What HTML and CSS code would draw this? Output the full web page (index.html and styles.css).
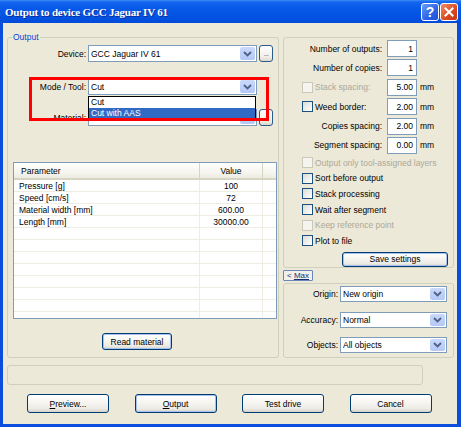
FILE: index.html
```html
<!DOCTYPE html>
<html>
<head>
<meta charset="utf-8">
<title>Output to device</title>
<link rel="stylesheet" href="styles.css">
</head>
<body>
<div class="window">
  <div class="titlebar">
    <span class="title">Output to device GCC Jaguar IV 61</span>
    <div class="tb-buttons">
      <span class="tb-btn help">?</span>
      <span class="tb-btn close"><svg width="10" height="10" viewBox="0 0 10 10"><path d="M1.5 1.5 L8.5 8.5 M8.5 1.5 L1.5 8.5" stroke="#fff" stroke-width="2" stroke-linecap="square"/></svg></span>
    </div>
  </div>
  <div class="client">
    <div class="top">
      <div class="group left-group">
        <span class="legend">Output</span>
        <div class="form-row">
          <span class="form-label">Device:</span>
          <div class="combo wide"><span class="txt">GCC Jaguar IV 61</span><span class="arrow"><svg width="9" height="6" viewBox="0 0 9 6"><path d="M1 1 L4.5 4.5 L8 1" stroke="#4D6185" stroke-width="1.8" fill="none"/></svg></span></div>
          <button class="dots">...</button>
        </div>
        <div class="form-row mode-row">
          <span class="form-label">Mode / Tool:</span>
          <div class="combo wide"><span class="txt">Cut</span><span class="arrow"><svg width="9" height="6" viewBox="0 0 9 6"><path d="M1 1 L4.5 4.5 L8 1" stroke="#4D6185" stroke-width="1.8" fill="none"/></svg></span></div>
        </div>
        <div class="form-row material-row">
          <span class="form-label">Material:</span>
          <div class="combo wide"><span class="txt"></span><span class="arrow"><svg width="9" height="6" viewBox="0 0 9 6"><path d="M1 1 L4.5 4.5 L8 1" stroke="#4D6185" stroke-width="1.8" fill="none"/></svg></span></div>
          <button class="dots"></button>
        </div>
        <div class="listview">
          <div class="lv-head">
            <span class="lv-c1">Parameter</span>
            <span class="lv-c2">Value</span>
            <span class="lv-c3"></span>
          </div>
          <div class="lv-row"><span class="lv-c1">Pressure [g]</span><span class="lv-c2">100</span><span class="lv-c3"></span></div>
          <div class="lv-row"><span class="lv-c1">Speed [cm/s]</span><span class="lv-c2">72</span><span class="lv-c3"></span></div>
          <div class="lv-row"><span class="lv-c1">Material width [mm]</span><span class="lv-c2">600.00</span><span class="lv-c3"></span></div>
          <div class="lv-row"><span class="lv-c1">Length [mm]</span><span class="lv-c2">30000.00</span><span class="lv-c3"></span></div>
          <div class="lv-row"><span class="lv-c1"></span><span class="lv-c2"></span><span class="lv-c3"></span></div>
          <div class="lv-row"><span class="lv-c1"></span><span class="lv-c2"></span><span class="lv-c3"></span></div>
          <div class="lv-row"><span class="lv-c1"></span><span class="lv-c2"></span><span class="lv-c3"></span></div>
          <div class="lv-row"><span class="lv-c1"></span><span class="lv-c2"></span><span class="lv-c3"></span></div>
          <div class="lv-row"><span class="lv-c1"></span><span class="lv-c2"></span><span class="lv-c3"></span></div>
          <div class="lv-row"><span class="lv-c1"></span><span class="lv-c2"></span><span class="lv-c3"></span></div>
          <div class="lv-row"><span class="lv-c1"></span><span class="lv-c2"></span><span class="lv-c3"></span></div>
          <div class="lv-row"><span class="lv-c1"></span><span class="lv-c2"></span><span class="lv-c3"></span></div>
        </div>
        <button class="btn read-btn default">Read material</button>

        <div class="dropdown">
          <div class="item">Cut</div>
          <div class="item sel">Cut with AAS</div>
        </div>
        <div class="highlight"></div>
      </div>

      <div class="right-col">
        <div class="group rg1">
          <div class="fields">
            <div class="field-row"><span class="field-label">Number of outputs:</span><span class="num">1</span></div>
            <div class="field-row"><span class="field-label">Number of copies:</span><span class="num">1</span></div>
            <div class="field-row"><span class="field-label check disabled"><span class="cb off"></span>Stack spacing:</span><span class="num">5.00</span><span class="unit">mm</span></div>
            <div class="field-row"><span class="field-label check"><span class="cb"></span>Weed border:</span><span class="num">2.00</span><span class="unit">mm</span></div>
            <div class="field-row"><span class="field-label">Copies spacing:</span><span class="num">2.00</span><span class="unit">mm</span></div>
            <div class="field-row"><span class="field-label">Segment spacing:</span><span class="num">0.00</span><span class="unit">mm</span></div>
          </div>
          <div class="checks">
            <div class="check-row disabled"><span class="cb off"></span>Output only tool-assigned layers</div>
            <div class="check-row"><span class="cb"></span>Sort before output</div>
            <div class="check-row"><span class="cb"></span>Stack processing</div>
            <div class="check-row"><span class="cb"></span>Wait after segment</div>
            <div class="check-row disabled"><span class="cb off"></span>Keep reference point</div>
            <div class="check-row"><span class="cb"></span>Plot to file</div>
          </div>
          <button class="btn save-btn default">Save settings</button>
        </div>
        <button class="max-btn">&lt; <u>Max</u></button>
        <div class="group rg2">
          <div class="sel-row">
            <span class="sel-label">Origin:</span>
            <div class="combo narrow"><span class="txt">New origin</span><span class="arrow"><svg width="9" height="6" viewBox="0 0 9 6"><path d="M1 1 L4.5 4.5 L8 1" stroke="#4D6185" stroke-width="1.8" fill="none"/></svg></span></div>
          </div>
          <div class="sel-row">
            <span class="sel-label">Accuracy:</span>
            <div class="combo narrow"><span class="txt">Normal</span><span class="arrow"><svg width="9" height="6" viewBox="0 0 9 6"><path d="M1 1 L4.5 4.5 L8 1" stroke="#4D6185" stroke-width="1.8" fill="none"/></svg></span></div>
          </div>
          <div class="sel-row">
            <span class="sel-label">Objects:</span>
            <div class="combo narrow"><span class="txt">All objects</span><span class="arrow"><svg width="9" height="6" viewBox="0 0 9 6"><path d="M1 1 L4.5 4.5 L8 1" stroke="#4D6185" stroke-width="1.8" fill="none"/></svg></span></div>
          </div>
        </div>
      </div>
    </div>

    <div class="status"></div>

    <div class="buttons">
      <button class="btn"><u>P</u>review...</button>
      <button class="btn default"><u>O</u>utput</button>
      <button class="btn">Test drive</button>
      <button class="btn">Cancel</button>
    </div>
  </div>
</div>
</body>
</html>
```

FILE: styles.css
```css
* { box-sizing: border-box; }
html, body { margin: 0; padding: 0; }
body {
  width: 461px;
  height: 427px;
  overflow: hidden;
  font-family: "Liberation Sans", Arial, sans-serif;
  font-size: 8.5px;
  color: #000;
  background: #ECE9D8;
}
button { font: inherit; color: #000; margin: 0; padding: 0; }

.window {
  width: 461px;
  height: 427px;
  display: flex;
  flex-direction: column;
}

/* title bar */
.titlebar {
  height: 23px;
  flex: none;
  display: flex;
  align-items: center;
  justify-content: space-between;
  padding: 0 3px 0 5px;
  background: linear-gradient(#3C8DF8 0, #1466EE 2px, #075AE8 35%, #0352E2 75%, #044AD8 100%);
}
.title {
  color: #fff;
  font-family: "Liberation Serif", serif;
  font-weight: bold;
  font-size: 11px;
  letter-spacing: -0.2px;
  text-shadow: 1px 1px 0 #0B2C9A;
}
.tb-buttons { display: flex; gap: 1px; }
.tb-btn {
  width: 18px;
  height: 18px;
  border: 1px solid #fff;
  border-radius: 3px;
  display: flex;
  align-items: center;
  justify-content: center;
}
.help {
  background: linear-gradient(135deg, #6A9CFA, #2C63E6 60%, #1C4FD8);
  color: #fff;
  font-weight: bold;
  font-size: 14px;
  line-height: 1;
}
.close {
  background: linear-gradient(135deg, #F08A66, #DA4A22 60%, #C43A14);
}

/* client */
.client {
  flex: 1;
  display: flex;
  flex-direction: column;
  border-style: solid;
  border-color: #0B4DDC;
  border-width: 0 4px 3px 3px;
  padding: 14px 3px 0 4px;
  background: #ECE9D8;
}
.top {
  display: flex;
  gap: 4px;
  height: 321px;
}
.group {
  border: 1px solid #D0D0BF;
  border-radius: 3px;
  position: relative;
}
.legend {
  position: absolute;
  left: 4px;
  top: -6px;
  padding: 0 1px;
  line-height: 10px;
  background: #ECE9D8;
  color: #0046D5;
}

/* left group */
.left-group {
  width: 272px;
  display: flex;
  flex-direction: column;
  padding-top: 7px;
}
.form-row {
  display: flex;
  align-items: center;
  height: 17px;
  gap: 2px;
  flex: none;
}
.form-label {
  width: 78px;
  text-align: right;
}
.mode-row { margin-top: 16px; }
.material-row { margin-top: 14px; }

.combo {
  display: flex;
  align-items: center;
  height: 100%;
  border: 1px solid #7F9DB9;
  background: #fff;
  padding-left: 2px;
}
.combo.wide { width: 169px; }
.combo.narrow { width: 107px; }
.combo .txt { flex: 1; white-space: nowrap; overflow: hidden; }
.arrow {
  width: 15px;
  height: calc(100% - 2px);
  margin-right: 1px;
  border-radius: 2px;
  background: linear-gradient(#CAD9FC, #B4C8F6);
  display: flex;
  align-items: center;
  justify-content: center;
}
.dots {
  width: 14px;
  height: 17px;
  border: 1px solid #2D5A8C;
  border-radius: 3px;
  background: linear-gradient(#FFFFFF, #F1EFE8 70%, #DCD8CC);
  font-size: 8px;
  line-height: 8px;
  display: flex;
  align-items: flex-end;
  justify-content: center;
  padding-bottom: 3px;
  color: #666;
  letter-spacing: -0.5px;
}

/* list view */
.listview {
  margin: 36px 0 0 5px;
  width: 264px;
  height: 157px;
  flex: none;
  border: 1px solid #7F9DB9;
  background: #fff;
  overflow: hidden;
}
.lv-head, .lv-row {
  display: grid;
  grid-template-columns: 186px 63px 1fr;
}
.lv-head {
  height: 17px;
  background: linear-gradient(#FFFFFF, #F6F5EF 60%, #EDECE2);
  border-bottom: 2px solid #D8D4C4;
}
.lv-head span {
  display: flex;
  align-items: center;
  border-right: 1px solid #D8D4C4;
}
.lv-head .lv-c1 { padding-left: 7px; }
.lv-head .lv-c2 { justify-content: center; }
.lv-head .lv-c3 { border-right: none; }
.lv-row { height: 12px; }
.lv-row span {
  display: flex;
  align-items: center;
  border-bottom: 1px solid #EFEDE3;
  border-right: 1px solid #EFEDE3;
}
.lv-row .lv-c1 { padding-left: 5px; }
.lv-row .lv-c2 { justify-content: center; }
.lv-row .lv-c3 { border-right: none; }

.btn {
  width: 82px;
  height: 19px;
  border: 1px solid #003C74;
  border-radius: 3px;
  background: linear-gradient(#FFFFFF 0%, #F7F6F2 40%, #ECEBE6 80%, #D8D2C6 100%);
  text-align: center;
}
.btn.default {
  box-shadow: inset 0 0 0 1px #A8C2EF;
}
.read-btn {
  margin: 14px 0 0 94px;
  width: 70px;
  height: 17px;
  flex: none;
}

/* overlays */
.dropdown {
  position: absolute;
  left: 80px;
  top: 58px;
  width: 168px;
  height: 24px;
  border: 1px solid #000;
  background: #fff;
  z-index: 2;
}
.item {
  height: 11px;
  line-height: 11px;
  padding-left: 2px;
}
.item.sel {
  background: #316AC5;
  color: #fff;
}
.highlight {
  position: absolute;
  left: 21px;
  top: 39px;
  width: 240px;
  height: 44px;
  border: 3px solid #FF0000;
  z-index: 3;
}

/* right column */
.right-col {
  width: 171px;
  display: flex;
  flex-direction: column;
}
.rg1 {
  height: 231px;
  flex: none;
  padding-top: 2px;
  display: flex;
  flex-direction: column;
}
.fields {
  display: flex;
  flex-direction: column;
  gap: 2.4px;
}
.field-row {
  display: flex;
  align-items: center;
  height: 17px;
}
.field-label {
  width: 98px;
  display: flex;
  align-items: center;
  justify-content: flex-end;
  white-space: nowrap;
}
.field-label.check {
  justify-content: flex-start;
  padding-left: 18px;
  gap: 2px;
}
.num {
  width: 30px;
  height: 17px;
  margin-left: 5px;
  border: 1px solid #7F9DB9;
  background: #fff;
  display: flex;
  align-items: center;
  justify-content: flex-end;
  padding-right: 3px;
}
.unit { margin-left: 3px; }

.checks {
  margin-top: 1px;
  display: flex;
  flex-direction: column;
}
.check-row {
  height: 15.6px;
  display: flex;
  align-items: center;
  padding-left: 18px;
  gap: 2px;
  white-space: nowrap;
}
.cb {
  width: 11px;
  height: 11px;
  flex: none;
  border: 1px solid #1C5180;
  background: linear-gradient(135deg, #DCDCD5, #FFFFFF);
}
.cb.off {
  border-color: #CAC8BB;
  background: #F5F4EF;
}
.disabled { color: #ACA899; }

.save-btn {
  width: 106px;
  height: 15px;
  margin: 3px 5px 0 auto;
}

.max-btn {
  margin-top: 2px;
  width: 30px;
  height: 11px;
  flex: none;
  border: 1px solid #6A85B8;
  border-radius: 1px;
  background: #F1F0EA;
  font-size: 8px;
  line-height: 9px;
  color: #1B2E6B;
}

.rg2 {
  margin-top: 2px;
  height: 75px;
  flex: none;
  padding-top: 2px;
  display: flex;
  flex-direction: column;
  gap: 9.5px;
}
.sel-row {
  display: flex;
  align-items: center;
  height: 16px;
  gap: 2px;
}
.sel-label {
  width: 54px;
  text-align: right;
}

/* bottom */
.status {
  margin-top: 7px;
  width: 416px;
  height: 20px;
  flex: none;
  border: 1px solid #D0D0BF;
  border-radius: 3px;
}
.buttons {
  margin-top: 9px;
  display: flex;
  gap: 25.5px;
  padding-left: 20px;
}
```
